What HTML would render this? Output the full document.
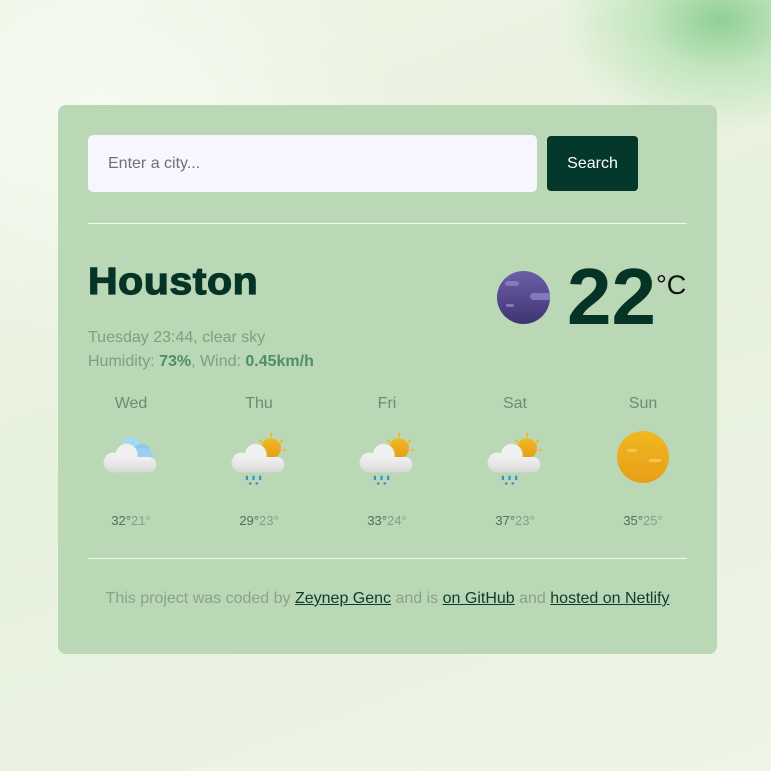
<!DOCTYPE html>
<html><head><meta charset="utf-8"><style>
*{box-sizing:border-box;margin:0;padding:0}
body{width:771px;height:771px;overflow:hidden;font-family:"Liberation Sans",Arial,sans-serif;
background:radial-gradient(ellipse 160px 110px at 720px 20px,#8fcf95 0%,rgba(170,220,170,.6) 45%,rgba(230,242,222,0) 100%),
radial-gradient(ellipse 300px 250px at 100px 120px,#f6faf1 0%,rgba(246,250,241,0) 100%),
linear-gradient(160deg,#eef5e5 0%,#e6f1dc 50%,#eef4e7 100%);position:relative}
.card{position:absolute;left:58px;top:105px;width:659px;height:549px;background:#bad7b6;border-radius:8px}
.inp{position:absolute;left:30px;top:30px;width:449px;height:57px;background:#f7f5fd;border-radius:5px;color:#6f6f78;font-size:16px;line-height:57px;padding-left:20px}
.btn{position:absolute;left:489px;top:31px;width:91px;height:55px;background:#04382a;border-radius:4px;color:#fff;font-size:16px;line-height:55px;text-align:center}
.hr{position:absolute;left:30px;width:599px;height:1px;background:#f2f7f0}
.city{position:absolute;left:30px;top:156px;font-size:38px;font-weight:bold;color:#053426;letter-spacing:0.5px;-webkit-text-stroke:1.2px #053426;transform:scaleX(1.08);transform-origin:left}
.det{position:absolute;left:30px;top:221px;font-size:16px;color:#829d82;line-height:24px}
.det b{color:#4f8d6c}
.moon{position:absolute;left:439px;top:166px;width:53px;height:53px;border-radius:50%;background:linear-gradient(180deg,#6d5fa6,#3f3472);overflow:hidden}
.moon i{position:absolute;background:#8577bd;border-radius:4px}
.temp{position:absolute;left:509px;top:142px;font-size:80px;font-weight:bold;color:#053426;line-height:100px}
.unit{position:absolute;left:598px;top:165px;font-size:27px;color:#111}
.col{position:absolute;top:290px;width:100px;text-align:center}
.day{font-size:16px;color:#718a72}
.ic{height:56px;margin:16px auto 0;width:60px;position:relative}
.ic svg{transform:scale(1.1)}
.t{position:absolute;top:408px;width:100px;font-size:13px;color:#53705a}
.t span{color:#86a084}
.foot{position:absolute;left:0;width:659px;top:485px;text-align:center;font-size:16px;color:#8aa388}
.foot a{color:#0d3d2d;text-decoration:underline}
</style></head><body>
<div class="card">
<div class="inp">Enter a city...</div>
<div class="btn">Search</div>
<div class="hr" style="top:118px"></div>
<div class="city">Houston</div>
<div class="det">Tuesday 23:44, clear sky<br>Humidity: <b>73%</b>, Wind: <b>0.45km/h</b></div>
<div class="moon"><i style="left:8px;top:10px;width:14px;height:5px"></i><i style="left:33px;top:22px;width:22px;height:7px"></i><i style="left:9px;top:33px;width:8px;height:3px"></i></div>
<div class="temp">22</div>
<div class="unit">°C</div>

<svg width="0" height="0" style="position:absolute"><defs>
<linearGradient id="cl" x1="0" y1="0" x2="0" y2="1"><stop offset="0" stop-color="#f2f2f2"/><stop offset="1" stop-color="#d8d8d8"/></linearGradient>
<linearGradient id="sun" x1="0" y1="0" x2="0" y2="1"><stop offset="0" stop-color="#f0b820"/><stop offset="1" stop-color="#e89e18"/></linearGradient>
</defs></svg>

<div class="col" style="left:23px"><div class="day">Wed</div><div class="ic"><svg width="60" height="56" viewBox="0 0 60 56">
<circle cx="30" cy="18" r="8" fill="#a6d8f5"/><circle cx="40" cy="24" r="8" fill="#8cc8ee"/><rect x="24" y="20" width="26" height="12" rx="6" fill="#9ccfef"/>
<circle cx="14" cy="33" r="9" fill="url(#cl)"/><circle cx="26" cy="26" r="10" fill="#f0f0f0"/><rect x="7" y="28" width="46" height="14" rx="7" fill="url(#cl)"/></svg></div></div>
<div class="col" style="left:151px"><div class="day">Thu</div><div class="ic"><svg width="60" height="56" viewBox="0 0 60 56">
<circle cx="41" cy="20" r="9" fill="url(#sun)"/><g stroke="#f0b820" stroke-width="1.5"><path d="M41 6v4M52 12l-3 3M55 22h-3M30 12l3 3"/></g>
<circle cx="14" cy="33" r="9" fill="url(#cl)"/><circle cx="27" cy="26" r="10" fill="#f0f0f0"/><rect x="7" y="28" width="46" height="14" rx="7" fill="url(#cl)"/>
<g fill="#3a92c8"><rect x="18" y="45" width="2" height="4"/><rect x="24" y="45" width="2" height="4"/><rect x="30" y="45" width="2" height="4"/><circle cx="22" cy="52" r="1.2"/><circle cx="28" cy="52" r="1.2"/></g></svg></div></div>
<div class="col" style="left:279px"><div class="day">Fri</div><div class="ic"><svg width="60" height="56" viewBox="0 0 60 56">
<circle cx="41" cy="20" r="9" fill="url(#sun)"/><g stroke="#f0b820" stroke-width="1.5"><path d="M41 6v4M52 12l-3 3M55 22h-3M30 12l3 3"/></g>
<circle cx="14" cy="33" r="9" fill="url(#cl)"/><circle cx="27" cy="26" r="10" fill="#f0f0f0"/><rect x="7" y="28" width="46" height="14" rx="7" fill="url(#cl)"/>
<g fill="#3a92c8"><rect x="18" y="45" width="2" height="4"/><rect x="24" y="45" width="2" height="4"/><rect x="30" y="45" width="2" height="4"/><circle cx="22" cy="52" r="1.2"/><circle cx="28" cy="52" r="1.2"/></g></svg></div></div>
<div class="col" style="left:407px"><div class="day">Sat</div><div class="ic"><svg width="60" height="56" viewBox="0 0 60 56">
<circle cx="41" cy="20" r="9" fill="url(#sun)"/><g stroke="#f0b820" stroke-width="1.5"><path d="M41 6v4M52 12l-3 3M55 22h-3M30 12l3 3"/></g>
<circle cx="14" cy="33" r="9" fill="url(#cl)"/><circle cx="27" cy="26" r="10" fill="#f0f0f0"/><rect x="7" y="28" width="46" height="14" rx="7" fill="url(#cl)"/>
<g fill="#3a92c8"><rect x="18" y="45" width="2" height="4"/><rect x="24" y="45" width="2" height="4"/><rect x="30" y="45" width="2" height="4"/><circle cx="22" cy="52" r="1.2"/><circle cx="28" cy="52" r="1.2"/></g></svg></div></div>
<div class="col" style="left:535px"><div class="day">Sun</div><div class="ic"><svg width="60" height="56" viewBox="0 0 60 56" style="transform:none">
<circle cx="30" cy="28" r="26" fill="url(#sun)"/><rect x="14" y="20" width="10" height="3" rx="1.5" fill="#f4c94a"/><rect x="36" y="30" width="12" height="3" rx="1.5" fill="#f4c94a"/></svg></div></div>

<div class="t" style="left:23px;text-align:center">32°<span>21°</span></div>
<div class="t" style="left:151px;text-align:center">29°<span>23°</span></div>
<div class="t" style="left:279px;text-align:center">33°<span>24°</span></div>
<div class="t" style="left:407px;text-align:center">37°<span>23°</span></div>
<div class="t" style="left:535px;text-align:center">35°<span>25°</span></div>

<div class="hr" style="top:453px"></div>
<div class="foot">This project was coded by <a>Zeynep Genc</a> and is <a>on GitHub</a> and <a>hosted on Netlify</a></div>
</div>
</body></html>
